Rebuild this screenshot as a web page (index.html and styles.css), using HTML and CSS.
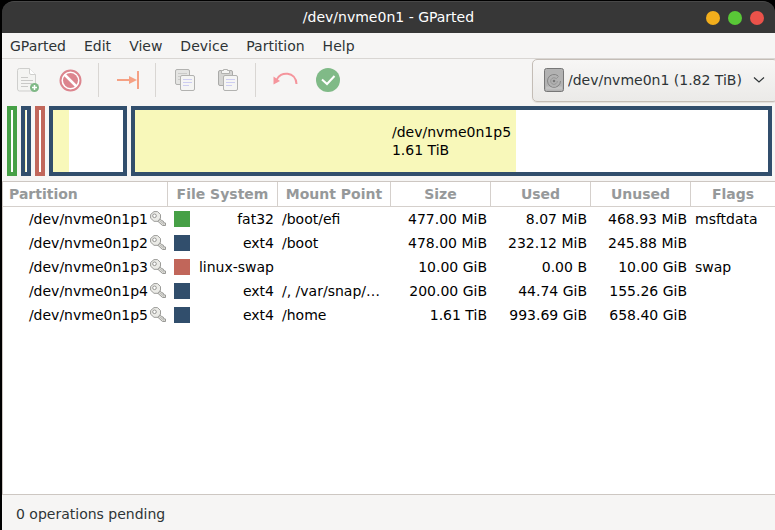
FILE: index.html
```html
<!DOCTYPE html>
<html lang="en">
<head>
<meta charset="utf-8">
<title>/dev/nvme0n1 - GParted</title>
<link rel="stylesheet" href="styles.css">
</head>
<body>
<svg class="defs" aria-hidden="true">
  <symbol id="key" viewBox="0 0 16 16">
    <path d="M7 9.500 12.500 14.500h3v-2.500l-1.800-.3-.5-1.700-1.700-.4L9.500 7z" fill="#deded9" stroke="#999996" stroke-linejoin="round"/>
    <path d="M9.500 9.500 14 13.500" stroke="#b8b8b5"/>
    <path d="M4 .6h3.500l3 2.900v3.500L8 10.300H4L.6 7.200V3.500z" fill="#ebebe7" stroke="#9c9c99" stroke-linejoin="round"/>
    <circle cx="4.500" cy="4.800" r="1.800" fill="#fff" stroke="#949491"/>
  </symbol>
</svg>
<div class="window">
  <header class="titlebar">
    <h1>/dev/nvme0n1 - GParted</h1>
    <div class="controls">
      <button class="dot minimize" aria-label="Minimize"></button>
      <button class="dot maximize" aria-label="Maximize"></button>
      <button class="dot close" aria-label="Close"></button>
    </div>
  </header>
  <nav class="menubar">
    <button>GParted</button><button>Edit</button><button>View</button><button>Device</button><button>Partition</button><button>Help</button>
  </nav>
  <div class="toolbar">
    <button class="tool" aria-label="New"><svg width="24" height="26" viewBox="0 0 24 26">
      <path d="M3.500 1.500h10l6 6V22a2 2 0 0 1-2 2h-14a2 2 0 0 1-2-2V3.500a2 2 0 0 1 2-2z" fill="#f4f4f2" stroke="#cfcfcd"/>
      <path d="M13.500 1.500V6a1.500 1.500 0 0 0 1.500 1.500h4.500" fill="#fff" stroke="#cfcfcd"/>
      <path d="M5 10.500h7M5 13.500h12M5 16.500h11M5 19.500h7" stroke="#c9c9c7"/>
      <circle cx="18.500" cy="20.500" r="4.500" fill="#7fb886"/><path d="M18.500 18v5M16 20.500h5" stroke="#fff" stroke-width="1.500"/>
    </svg></button>
    <button class="tool" aria-label="Delete"><svg width="24" height="24" viewBox="0 0 24 24">
      <circle cx="11.500" cy="12.500" r="10" fill="#fff" stroke="#dc858e" stroke-width="2"/><circle cx="11.500" cy="12.500" r="7.500" fill="#dc858e"/><path d="m5.500 6.500 12 12" stroke="#fff" stroke-width="2.500"/>
    </svg></button>
    <span class="sep"></span>
    <button class="tool" aria-label="Resize/Move"><svg width="24" height="24" viewBox="0 0 24 24">
      <path d="M1 12h14M22 3v18" stroke="#f5a184" stroke-width="2" fill="none"/><path d="M13 8 21 12 13 16z" fill="#f5a184"/>
    </svg></button>
    <span class="sep"></span>
    <button class="tool" aria-label="Copy"><svg width="24" height="24" viewBox="0 0 24 24">
      <rect x="2.500" y="1.500" width="14" height="15" rx="1.500" fill="#e4e4e2" stroke="#b2b2b0"/><path d="M5 5.500h9M5 8.500h6M5 11.500h3" stroke="#cacac8"/>
      <rect x="7.500" y="7.500" width="14" height="15" rx="1.500" fill="#f5f5f4" stroke="#b2b2b0"/><path d="M10 11.500h9M10 14.500h9M10 17.500h6" stroke="#cdcdf1"/>
    </svg></button>
    <button class="tool" aria-label="Paste"><svg width="24" height="24" viewBox="0 0 24 24">
      <rect x="2.500" y="2.500" width="14" height="15" rx="1.500" fill="#d5d5d3" stroke="#aaaaa8"/><path d="M5.500 5.500v-3h2v-1h4v1h2v3z" fill="#f5f5f4" stroke="#b2b2b0"/>
      <rect x="7.500" y="7.500" width="14" height="15" rx="1.500" fill="#f5f5f4" stroke="#b2b2b0"/><path d="M10 11.500h9M10 14.500h9M10 17.500h6" stroke="#cdcdf1"/>
    </svg></button>
    <span class="sep"></span>
    <button class="tool" aria-label="Undo"><svg width="26" height="24" viewBox="0 0 26 24">
      <path d="M4.500 12C8 2.500 24 3.500 24.500 16" fill="none" stroke="#f5959c" stroke-width="2"/><path d="M1.500 8.500V16.500l6.500-3.500z" fill="#f5959c"/>
    </svg></button>
    <button class="tool" aria-label="Apply"><svg width="24" height="24" viewBox="0 0 24 24">
      <circle cx="12" cy="12" r="12" fill="#80ba87"/><path d="m6 11.500 5 4.500 7.500-8" fill="none" stroke="#fff" stroke-width="2"/>
    </svg></button>
    <div class="device">
      <svg class="disk" width="20" height="24" viewBox="0 0 20 24" aria-hidden="true">
        <rect x=".5" y=".5" width="19" height="23" rx="2" fill="#b2b2b2" stroke="#777"/><path d="M2 18.500h16v3H2z" fill="#c2c2c2"/>
        <path d="M14 7.800A6.500 6.500 0 1 0 16.500 13" fill="none" stroke="#858585"/><path d="M12.300 10.700A3.300 3.300 0 1 0 13.300 13M12.300 10.700l2.500-2.500" fill="none" stroke="#8e8e8e" stroke-width=".8"/><circle cx="10" cy="13" r="1.300" fill="#777"/>
      </svg>
      <select aria-label="Device"><option>/dev/nvme0n1 (1.82 TiB)</option></select>
      <svg class="chevron" width="12" height="8" viewBox="0 0 12 8" aria-hidden="true"><path d="m1 1.500 5 4.500 5-4.500" fill="none" stroke="#2e3436" stroke-width="1.200"/></svg>
    </div>
  </div>
  <div class="diskmap">
    <div class="part small fat32"></div>
    <div class="part small ext4"><i class="used" style="width:50%"></i></div>
    <div class="part small swap"></div>
    <div class="part medium ext4"><i class="used" style="width:23%"></i></div>
    <div class="part large ext4"><i class="used" style="width:60.2%"></i><p>/dev/nvme0n1p5<br>1.61 TiB</p></div>
  </div>
  <main class="list">
    <table>
      <colgroup><col class="c-part"><col class="c-fs"><col class="c-mount"><col class="c-size"><col class="c-size"><col class="c-size"><col></colgroup>
      <thead><tr><th class="left">Partition</th><th>File System</th><th>Mount Point</th><th>Size</th><th>Used</th><th>Unused</th><th>Flags</th></tr></thead>
      <tbody>
        <tr><td><div class="name">/dev/nvme0n1p1<svg><use href="#key"/></svg></div></td><td><div class="fs"><i class="fat32"></i>fat32</div></td><td>/boot/efi</td><td class="num">477.00 MiB</td><td class="num">8.07 MiB</td><td class="num">468.93 MiB</td><td>msftdata</td></tr>
        <tr><td><div class="name">/dev/nvme0n1p2<svg><use href="#key"/></svg></div></td><td><div class="fs"><i class="ext4"></i>ext4</div></td><td>/boot</td><td class="num">478.00 MiB</td><td class="num">232.12 MiB</td><td class="num">245.88 MiB</td><td></td></tr>
        <tr><td><div class="name">/dev/nvme0n1p3<svg><use href="#key"/></svg></div></td><td><div class="fs"><i class="swap"></i>linux-swap</div></td><td></td><td class="num">10.00 GiB</td><td class="num">0.00 B</td><td class="num">10.00 GiB</td><td>swap</td></tr>
        <tr><td><div class="name">/dev/nvme0n1p4<svg><use href="#key"/></svg></div></td><td><div class="fs"><i class="ext4"></i>ext4</div></td><td>/, /var/snap/…</td><td class="num">200.00 GiB</td><td class="num">44.74 GiB</td><td class="num">155.26 GiB</td><td></td></tr>
        <tr><td><div class="name">/dev/nvme0n1p5<svg><use href="#key"/></svg></div></td><td><div class="fs"><i class="ext4"></i>ext4</div></td><td>/home</td><td class="num">1.61 TiB</td><td class="num">993.69 GiB</td><td class="num">658.40 GiB</td><td></td></tr>
      </tbody>
    </table>
  </main>
  <footer class="status">0 operations pending</footer>
</div>
</body>
</html>
```
FILE: styles.css
```css
* { box-sizing: border-box; }
body { margin: 0; background: #000; color: #2e3436; font-family: "DejaVu Sans", sans-serif; font-size: 14px; line-height: 18px; }
button, select { font: inherit; color: inherit; border: 0; background: none; padding: 0; margin: 0; }
svg { display: block; }
.defs { position: absolute; width: 0; height: 0; }
.window { min-height: 100vh; padding: 1px 0 0 2px; display: flex; flex-direction: column; overflow: hidden; }
.titlebar { height: 32px; background: #373737; border-top: 1px solid #484848; border-radius: 12px 12px 0 0; display: grid; grid-template-columns: 1fr auto 1fr; align-items: center; }
.titlebar h1 { grid-column: 2; margin: 0; padding-bottom: 2px; font-size: 14px; font-weight: 400; color: #fff; }
.controls { display: flex; gap: 8px; justify-content: flex-end; padding-right: 11px; }
.dot { width: 14px; height: 14px; border-radius: 50%; }
.minimize { background: #f2ae1c; }
.maximize { background: #59c837; }
.close { background: #ea524a; }
.menubar { height: 26px; background: #f6f5f4; border-bottom: 1px solid #d9d6d3; display: flex; align-items: center; gap: 18px; padding-left: 8px; }
.toolbar { height: 44px; background: #f6f5f4; display: flex; align-items: flex-start; padding-left: 4px; }
.tool { width: 43px; height: 42px; display: grid; place-items: center; }
.sep { width: 1px; height: 34px; margin: 4px 7px 4px 6px; background: #d9d6d3; }
.device { position: relative; width: 246px; height: 43px; margin: 0 -3px 0 auto; }
.device select { appearance: none; width: 100%; height: 43px; padding: 0 0 2px 35px; border: 1px solid #c4bdb6; border-radius: 5px; background: linear-gradient(#f7f6f5, #ebeae8); box-shadow: 0 1px 1px #e2dfdc; }
.disk { position: absolute; left: 12px; top: 9px; }
.chevron { position: absolute; right: 13px; top: 17px; }
.diskmap { background: #f6f5f4; display: flex; gap: 4px; padding: 3px 3px 5px 5px; }
.part { position: relative; height: 70px; border: 4px solid; background: #fff; display: grid; place-items: center; }
.part.ext4 { border-color: #314e6c; }
.part.fat32 { border-color: #46a046; }
.part.swap { border-color: #c1665a; }
.small { width: 10px; }
.medium { width: 78px; }
.large { flex: 1; }
.used { position: absolute; left: 0; top: 0; bottom: 0; background: #f8f8ba; }
.part p { position: relative; margin: 0; color: #000; }
.list { flex: 1; background: #fff; border: 1px solid #cdc7c2; border-right: 0; }
table { width: 100%; table-layout: fixed; border-collapse: separate; border-spacing: 0; color: #000; }
.c-part { width: 165px; }
.c-fs { width: 110px; }
.c-mount { width: 113px; }
.c-size { width: 100px; }
th { height: 25px; padding: 0; color: #96999a; border-right: 1px solid #d5d0cc; border-bottom: 1px solid #d5d0cc; }
th:last-child { border-right: 0; }
th.left { text-align: left; padding-left: 6px; }
td { height: 24px; padding: 0 4px; white-space: nowrap; }
.num { text-align: right; }
.name { display: flex; justify-content: flex-end; align-items: center; gap: 2px; margin-right: -2px; }
.name svg { width: 16px; height: 16px; }
.fs { display: flex; justify-content: space-between; align-items: center; padding-left: 2px; }
.fs i { width: 16px; height: 16px; }
i.fat32 { background: #46a046; }
i.ext4 { background: #314e6c; }
i.swap { background: #c1665a; }
.status { height: 35px; background: #f6f5f4; padding: 10px 14px; }
```
